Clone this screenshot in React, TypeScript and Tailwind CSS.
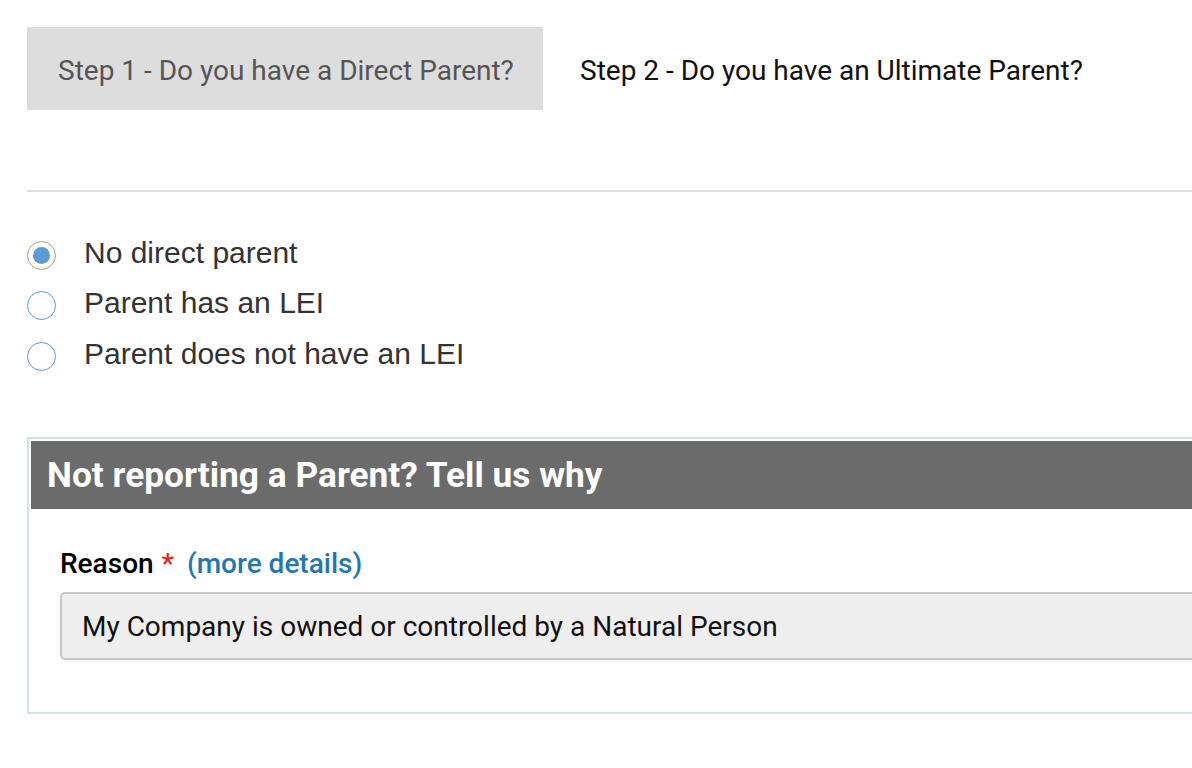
import React from "react";

function Radio({ checked, label }: { checked?: boolean; label: string }) {
  return (
    <div className="flex items-center h-[50.5px]">
      <span
        className={
          "flex items-center justify-center w-[29px] h-[29px] rounded-full border-[1.75px] bg-white " +
          (checked ? "border-[#93ad75]" : "border-[#5a9cc8]")
        }
      >
        {checked && <span className="block w-[17px] h-[17px] rounded-full bg-[#5b9bcf]" />}
      </span>
      <span className="ml-[28px] mb-[5px] text-[30px] text-[#333333] font-['Liberation_Sans',Arial,sans-serif] leading-none">
        {label}
      </span>
    </div>
  );
}

export default function App() {
  return (
    <div className="w-[1192px] h-[768px] overflow-hidden bg-white">
      <div className="w-[1320px] pl-[27px] pt-[27px] font-['Roboto',sans-serif]">
        <div className="flex items-center">
          <div className="w-[516px] h-[83px] bg-[#dddddd] flex items-center pl-[31px] pt-[4px] text-[28px] text-[#555555] leading-none">
            Step 1 - Do you have a Direct Parent?
          </div>
          <div className="pl-[37px] pt-[4px] text-[28px] text-[#111111] leading-none">Step 2 - Do you have an Ultimate Parent?</div>
        </div>
        <div className="mt-[80px] h-[2px] bg-[#dddddd]" />
        <div className="mt-[38px] flex flex-col">
          <Radio checked label="No direct parent" />
          <Radio label="Parent has an LEI" />
          <Radio label="Parent does not have an LEI" />
        </div>
        <div className="mt-[55px] border-2 border-[#d3e4d9] p-[2px] pb-[52px]">
          <div className="h-[68px] bg-[#6b6b6b] flex items-center pl-[16px] pt-[2px] text-white font-bold text-[35.3px] leading-none">
            Not reporting a Parent? Tell us why
          </div>
          <div className="pl-[29px] pt-[41px]">
            <div className="flex items-baseline text-[28px] font-medium leading-none">
              <span className="text-black">Reason</span>
              <span className="text-[#e8241c] ml-[8px]">*</span>
              <span className="text-[#1f78b4] ml-[13px]">(more details)</span>
            </div>
            <div className="mt-[14px] h-[68px] rounded-[5px] border-2 border-[#c8c8c8] bg-[#eeeeee] flex items-center pl-[20px] pt-[2px] text-[28px] text-[#111111] leading-none">
              My Company is owned or controlled by a Natural Person
            </div>
          </div>
        </div>
      </div>
    </div>
  );
}
